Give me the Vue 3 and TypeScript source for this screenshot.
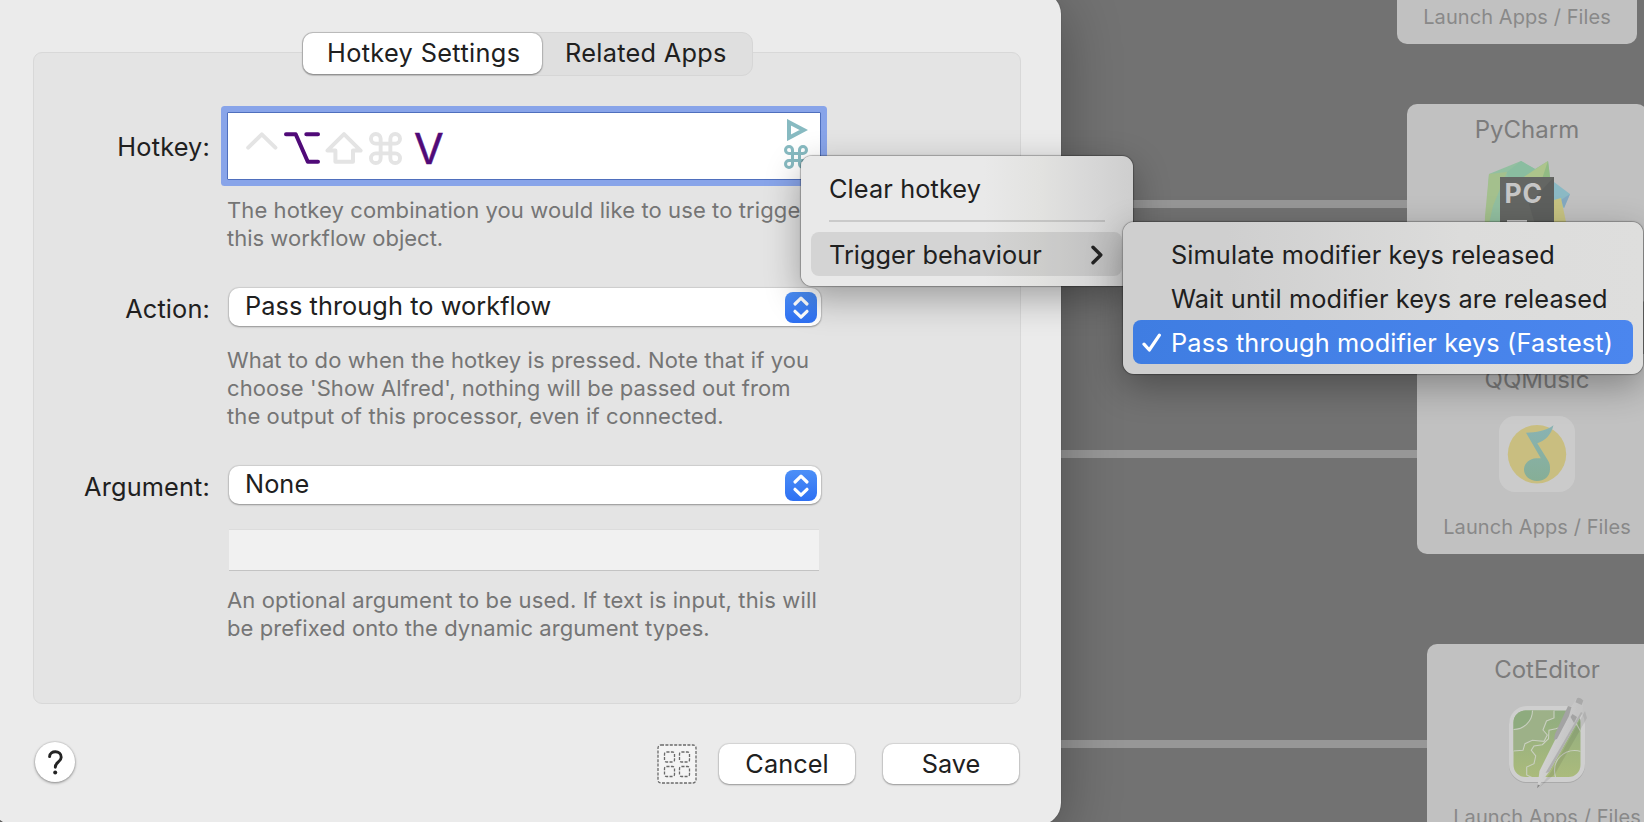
<script setup lang="ts">
import { ref } from 'vue'

interface WorkflowNode {
  title: string
  icon: 'none' | 'pycharm' | 'qqmusic' | 'coteditor'
  left: number
  top: number
}

const nodes: WorkflowNode[] = [
  { title: '', icon: 'none', left: 1397, top: -156 },
  { title: 'PyCharm', icon: 'pycharm', left: 1407, top: 104 },
  { title: 'QQMusic', icon: 'qqmusic', left: 1417, top: 354 },
  { title: 'CotEditor', icon: 'coteditor', left: 1427, top: 644 },
]

const links = [
  { top: 200, width: 347 },
  { top: 450, width: 357 },
  { top: 740, width: 367 },
]

const behaviours = [
  { label: 'Simulate modifier keys released', cls: 'sim' },
  { label: 'Wait until modifier keys are released', cls: 'wait' },
  { label: 'Pass through modifier keys (Fastest)', cls: 'pass' },
]
const selected = ref(2)

const commandPath =
  'M15 6v12a3 3 0 1 0 3-3H6a3 3 0 1 0 3 3V6a3 3 0 1 0-3 3h12a3 3 0 1 0-3-3'
</script>

<template>
  <main class="canvas">
    <div
      v-for="link in links"
      :key="link.top"
      class="link"
      :style="{ top: link.top + 'px', width: link.width + 'px' }"
    ></div>

    <article
      v-for="node in nodes"
      :key="node.left"
      class="node"
      :style="{ left: node.left + 'px', top: node.top + 'px' }"
    >
      <h3 class="node-title">{{ node.title }}</h3>
      <svg class="node-icon" viewBox="0 0 96 96">
        <g v-if="node.icon === 'pycharm'">
          <path d="M10 18 42 5 56 13 69 5 71 21 75 28 75 90 5 90Z" fill="#92bfa0" />
          <path d="M10 18 28 16 14 50 5 90 6 60Z" fill="#a4c08d" />
          <path d="M28 16 42 5 56 13 45 24 30 30Z" fill="#8abda0" />
          <path d="M40 24 69 5 62 30Z" fill="#adc48b" />
          <path d="M69 5 71 21 75 28 62 26Z" fill="#92bb83" />
          <path d="M75 26 91 38 85 52 75 46Z" fill="#8bb9c4" />
          <path d="M91 38 85 52 82 44Z" fill="#84a8c0" />
          <path d="M75 44 82 42 87 66 90 90 75 90Z" fill="#c7c382" />
          <rect x="21" y="21" width="54" height="54" fill="#646663" />
          <path d="M75 21v54H58L50 48Z" fill="#5d5f5d" />
          <text x="25.6" y="47" class="pc">PC</text>
          <rect x="28" y="64" width="20" height="4" fill="#c4c4c4" />
        </g>
        <g v-else-if="node.icon === 'qqmusic'">
          <defs>
            <linearGradient id="note" x1="0" y1="0" x2="0" y2="1">
              <stop offset="0" stop-color="#89b3b3" />
              <stop offset="1" stop-color="#86ae96" />
            </linearGradient>
          </defs>
          <rect x="10" y="10" width="76" height="76" rx="16" fill="#cbcbcb" />
          <circle cx="48" cy="48.2" r="29.2" fill="#c9be80" />
          <path
            d="M37 26.7C47 26.5 57 25 64.5 19.3 62 29 57 34 48.3 37.3L59 54.5C61 57.5 61 60 61 63.5 61 70.5 55 75 48 75S35 70 35 63.5 41 52.5 47 52.2L51.8 52.2Z"
            fill="url(#note)"
          />
        </g>
        <g v-else-if="node.icon === 'coteditor'">
          <defs>
            <linearGradient id="cot" x1="0" y1="0" x2="0" y2="1">
              <stop offset="0" stop-color="#8fac80" />
              <stop offset="1" stop-color="#abbb7c" />
            </linearGradient>
            <linearGradient id="pen" x1="0" y1="0" x2="1" y2="0.4">
              <stop offset="0.3" stop-color="#d2d2d2" />
              <stop offset="0.8" stop-color="#c4c4c4" />
            </linearGradient>
            <clipPath id="map"><rect x="14.5" y="14.5" width="67" height="66.5" rx="12" /></clipPath>
          </defs>
          <rect x="10" y="11" width="76" height="76" rx="18" fill="#aaaaaa" />
          <rect x="10" y="10" width="76" height="76" rx="18" fill="#cfcfcf" />
          <g clip-path="url(#map)">
            <rect x="14" y="14" width="68" height="68" fill="url(#cot)" />
            <path
              d="M55 14V22L47.5 25 44 34 48.3 39 45 45.3 33.3 44.3 26 47.7 24 54.3 14 55V33L33 14Z"
              fill="#9db188"
            />
            <g fill="none" stroke="#c9cfc0" stroke-width="1.1">
              <circle cx="14.5" cy="14.5" r="19" fill="#8eab7e" />
              <path d="M55 14V22L47.5 25 44 34 48.3 39 45 45.3 33.3 44.3 26 47.7 24 54.3 14 55" />
              <path
                d="M82 36 77.3 27.7 66 30 56.7 32.7 50 34.3 49.5 42.7 43.3 48.7 35 50 32.3 54.3 36.7 60 35 67.7 27.7 71V79L34 82"
              />
              <circle cx="75.5" cy="74.5" r="20" />
            </g>
          </g>
          <path d="M40 92 52 76 86 15 88 22 56 78Z" fill="#000" opacity="0.08" />
          <path d="M38.3 91.7 40.5 75 73 10 77 3 84.3 5 83.5 17 50 76Z" fill="url(#pen)" />
          <path d="M46.5 77 50 76 83.5 17 82 16Z" fill="#b0b0b0" />
          <path d="M78 2.2Q81 .8 84.3 4.4L82.7 9 76.5 6.3Z" fill="#a9a9a9" />
          <path d="M69 10 72.5 11 70 20 58 43 55 44 56 38Z" fill="#a3a3a3" />
          <path d="M71.5 21 73.5 18 78 21 75 27Z" fill="#a3a3a3" />
          <path d="M38 92.2 38.8 88.5 41 89.5Z" fill="#858585" />
        </g>
      </svg>
      <p class="node-kind">Launch Apps / Files</p>
    </article>

    <section class="dialog">
      <nav class="tabs">
        <button class="tab tab-on">Hotkey Settings</button>
        <button class="tab tab-off">Related Apps</button>
      </nav>

      <div class="panel">
        <div class="row">
          <label class="label label-hotkey">Hotkey:</label>
          <div class="field">
            <div class="hotkey">
              <svg class="g-ctrl" viewBox="0 0 32 32">
                <path d="M2.2 15.6 15.8 2.4 29.4 15.6" />
              </svg>
              <svg class="g-opt" viewBox="0 0 36 32">
                <path d="M2 2.3H11.7L23.8 29.8H34M22.3 2.3H34" />
              </svg>
              <svg class="g-shift" viewBox="0 0 38 32">
                <path d="M19 2.2 35.6 18.6H28V29.8H10.4V18.6H2.4Z" />
              </svg>
              <svg class="g-cmd" viewBox="1.8 1.8 20.4 20.4"><path :d="commandPath" /></svg>
              <span class="key">V</span>
              <div class="badges">
                <svg class="b-play" viewBox="0 0 21 22">
                  <path d="M2 3.2 16.8 11 2 18.8Z" />
                </svg>
                <svg class="b-cmd" viewBox="1.7 1.7 20.6 20.6"><path :d="commandPath" /></svg>
              </div>
            </div>
            <p class="hint">
              <span class="h1a">The hotkey combination you would like to use to trigger</span><br />
              <span class="h1b">this workflow object.</span>
            </p>
          </div>
        </div>

        <div class="row">
          <label class="label">Action:</label>
          <div class="field">
            <div class="popup">
              <span>Pass through to workflow</span>
              <i class="stepper">
                <svg viewBox="0 0 32 31"><path d="M10 12 16 6.2 22 12M10 19.3 16 25.1 22 19.3" /></svg>
              </i>
            </div>
            <p class="hint hint-low">
              What to do when the hotkey is pressed. Note that if you<br />
              <span class="h2b">choose 'Show Alfred', nothing will be passed out from</span><br />
              the output of this processor, even if connected.
            </p>
          </div>
        </div>

        <div class="row">
          <label class="label">Argument:</label>
          <div class="field">
            <div class="popup">
              <span>None</span>
              <i class="stepper">
                <svg viewBox="0 0 32 31"><path d="M10 12 16 6.2 22 12M10 19.3 16 25.1 22 19.3" /></svg>
              </i>
            </div>
            <div class="textfield"></div>
            <p class="hint">
              <span class="h3a">An optional argument to be used. If text is input, this will</span><br />
              <span class="h2b">be prefixed onto the dynamic argument types.</span>
            </p>
          </div>
        </div>
      </div>

      <footer class="footer">
        <button class="help">
          <svg viewBox="0 0 40 40">
            <path d="M14.6 14.6C14.8 8 26.2 8.2 26.2 15.2 26.2 20 20.3 19.8 20.3 25.2" />
            <circle cx="20.2" cy="30.6" r="2" />
          </svg>
        </button>
        <svg class="grid-icon" viewBox="0 0 40 40">
          <rect x="1" y="1" width="38" height="38" rx="3" />
          <rect x="7.5" y="8" width="10" height="10" rx="2" />
          <rect x="22.5" y="8" width="10" height="10" rx="2" />
          <rect x="7.5" y="22.5" width="10" height="10" rx="2" />
          <rect x="22.5" y="22.5" width="10" height="10" rx="2" />
        </svg>
        <button class="btn">Cancel</button>
        <button class="btn">Save</button>
      </footer>
    </section>

    <div class="menu context">
      <div class="item clear">Clear hotkey</div>
      <hr class="rule" />
      <div class="item open">
        <span>Trigger behaviour</span>
        <svg class="chevron" viewBox="0 0 12 20"><path d="M2 2.2 9.8 10 2 17.8" /></svg>
      </div>
    </div>

    <div class="menu submenu">
      <div
        v-for="(b, i) in behaviours"
        :key="b.cls"
        class="item choice"
        :class="[b.cls, { chosen: i === selected }]"
        @click="selected = i"
      >
        <svg v-if="i === selected" class="check" viewBox="0 0 20 20">
          <path d="M2 11.2 7.3 17 17.4 2.2" />
        </svg>
        <span>{{ b.label }}</span>
      </div>
    </div>
    <div class="edge"></div>
  </main>
</template>

<style>
body {
  background: #727272;
}
</style>

<style scoped>
.canvas {
  position: relative;
  width: 1644px;
  height: 822px;
  overflow: hidden;
  background: #727272;
  color: #202020;
  font-family: 'Inter', 'Liberation Sans', sans-serif;
  font-size: 25.3px;
}
.canvas * {
  box-sizing: border-box;
}
button {
  border: 0;
  padding: 0;
  font: inherit;
  color: inherit;
}
svg {
  display: block;
  flex: none;
}

.link {
  position: absolute;
  left: 1060px;
  height: 8px;
  background: #979797;
}
.node {
  position: absolute;
  display: flex;
  flex-direction: column;
  align-items: center;
  width: 240px;
  height: 200px;
  padding-top: 10px;
  border-radius: 10px;
  background: #c1c1c1;
}
.node-title {
  height: 32px;
  margin: 0;
  font-size: 24px;
  font-weight: 400;
  line-height: 32px;
  letter-spacing: 0;
  color: #7c7c7c;
}
.node-icon {
  width: 96px;
  height: 96px;
  margin-top: 10px;
}
.node-kind {
  margin: 13px 0 0;
  font-size: 20px;
  line-height: 24px;
  letter-spacing: 0.08px;
  color: #898989;
}
.pc {
  font-family: 'Inter', sans-serif;
  font-size: 26.5px;
  font-weight: 700;
  letter-spacing: 0.8px;
  fill: #c6c6c6;
}

.dialog {
  position: absolute;
  left: -8px;
  top: -8px;
  display: flex;
  flex-direction: column;
  width: 1069px;
  height: 833px;
  padding: 40px 40px 0 41px;
  border-radius: 22px;
  background: #ebebeb;
  box-shadow:
    0 0 1px rgba(0, 0, 0, 0.6),
    0 14px 60px rgba(0, 0, 0, 0.32);
}
.tabs {
  z-index: 1;
  display: flex;
  align-self: flex-start;
  width: 451px;
  height: 44px;
  margin: 0 0 -24px 269px;
  padding: 1px;
  border: 1px solid #d6d6d6;
  border-radius: 11px;
  background: #dfdfdf;
}
.tab {
  height: 41px;
  margin-top: -1px;
  background: none;
  border-radius: 10px;
  line-height: 38px;
  text-align: left;
}
.tab-on {
  width: 239px;
  margin-left: -1px;
  padding: 0 0 2px 24px;
  background: #fff;
  box-shadow:
    0 0 1px 1px rgba(0, 0, 0, 0.13),
    0 1px 2px rgba(0, 0, 0, 0.35);
  letter-spacing: 0.36px;
}
.tab-off {
  padding: 0 0 2px 23px;
  letter-spacing: 0.3px;
}
.panel {
  height: 652px;
  padding-top: 59px;
  border: 1px solid #d8d8d8;
  border-radius: 9px;
  background: #e4e4e4;
}
.row {
  display: flex;
  gap: 17px;
  margin-bottom: 36px;
}
.label {
  width: 176px;
  padding-top: 2px;
  text-align: right;
  line-height: 38px;
  letter-spacing: 0.16px;
}
.label-hotkey {
  padding-top: 16px;
  letter-spacing: 0.2px;
}
.field {
  width: 660px;
}
.hotkey {
  display: flex;
  align-items: center;
  width: 594px;
  height: 68px;
  padding: 4px 12px 0 18px;
  border: 1px solid #4f6fbd;
  background: #fff;
  box-shadow: 0 0 0 6px #88a4e9;
  border-radius: 1px;
}
.hotkey svg {
  fill: none;
  stroke: #e4e4e4;
  stroke-width: 4;
  stroke-linecap: round;
  stroke-linejoin: round;
}
.g-ctrl {
  width: 32px;
  height: 32px;
}
.hotkey .g-opt {
  width: 36px;
  height: 32px;
  margin-left: 6px;
  stroke: #500a78;
}
.g-shift {
  width: 38px;
  height: 32px;
  margin-left: 5px;
}
.hotkey .g-cmd {
  width: 33px;
  height: 33px;
  margin-left: 6px;
  stroke-width: 2.4;
}
.key {
  margin-left: 12px;
  font-size: 43px;
  font-weight: 400;
  line-height: 34px;
  color: #500a78;
  -webkit-text-stroke: 0.5px #500a78;
}
.badges {
  display: flex;
  flex-direction: column;
  align-items: flex-end;
  gap: 4px;
  margin: -8px 0 0 auto;
}
.hotkey .b-play {
  width: 21px;
  height: 22px;
  stroke: #87bac1;
  stroke-linejoin: miter;
}
.hotkey .b-cmd {
  width: 24px;
  height: 24px;
  stroke: #87bac1;
  stroke-width: 2.6;
}
.hint {
  margin: 16px 0 0;
  font-size: 22px;
  line-height: 28px;
  letter-spacing: 0.1px;
  white-space: nowrap;
  color: #757575;
}
.hint-low {
  margin-top: 20px;
}
.h1b {
  letter-spacing: 0;
}
.h2b {
  letter-spacing: 0.06px;
}
.h3a {
  letter-spacing: 0.14px;
}
.popup {
  display: flex;
  justify-content: space-between;
  width: 592px;
  height: 38px;
  margin-left: 2px;
  padding: 4px 4px 0 16px;
  border-radius: 10px;
  background: #fff;
  box-shadow:
    0 0 1px 1px rgba(0, 0, 0, 0.09),
    0 1px 2px rgba(0, 0, 0, 0.3);
  line-height: 28px;
  letter-spacing: 0.07px;
}
.stepper {
  width: 32px;
  height: 31px;
  border-radius: 8px;
  background: linear-gradient(#4c8ff7, #2e70f3);
}
.stepper svg {
  width: 32px;
  height: 31px;
  fill: none;
  stroke: #fff;
  stroke-width: 3.2;
  stroke-linecap: round;
  stroke-linejoin: round;
}
.textfield {
  width: 590px;
  height: 42px;
  margin: 25px 0 -1px 2px;
  border-top: 1px solid #dcdcdc;
  border-bottom: 1px solid #c3c3c3;
  background: #f1f1f1;
}
.footer {
  display: flex;
  align-items: flex-start;
  padding: 40px 2px 0 2px;
}
.help {
  width: 40px;
  height: 40px;
  margin: -2px auto 0 0;
  border-radius: 50%;
  background: #fff;
  box-shadow:
    0 0 1px 1px rgba(0, 0, 0, 0.06),
    0 1px 3px rgba(0, 0, 0, 0.4);
}
.help path {
  fill: none;
  stroke: #232323;
  stroke-width: 2.9;
  stroke-linecap: round;
}
.help circle {
  fill: #232323;
}
.grid-icon {
  width: 40px;
  height: 40px;
  margin-right: 22px;
  fill: #f4f4f4;
  stroke: #6a6a6a;
  stroke-width: 1.3;
  stroke-dasharray: 3 1.4;
}
.btn {
  width: 136px;
  height: 40px;
  border-radius: 10px;
  background: #fff;
  box-shadow:
    0 0 1px 1px rgba(0, 0, 0, 0.09),
    0 1px 2px rgba(0, 0, 0, 0.3);
  line-height: 38px;
  padding-bottom: 1px;
  letter-spacing: 0.05px;
}
.btn + .btn {
  margin-left: 28px;
}

.menu {
  position: absolute;
  padding: 10px;
  border-radius: 11px;
  box-shadow:
    0 0 0 1px rgba(0, 0, 0, 0.12),
    0 0 2px rgba(0, 0, 0, 0.5),
    0 12px 36px rgba(0, 0, 0, 0.32);
}
.context {
  left: 801px;
  top: 156px;
  width: 332px;
  height: 130px;
  background: linear-gradient(90deg, #e9e9e9 55%, #e2e2e0 72%, #d8d8d8 86%, #cecece);
}
.submenu {
  left: 1123px;
  top: 222px;
  width: 520px;
  height: 152px;
  background: linear-gradient(90deg, #cfcfcf 20%, #dcdcdb 65%, #dededd);
}
.item {
  display: flex;
  align-items: center;
  height: 44px;
  padding: 1px 19px 0 18px;
  border-radius: 8px;
  letter-spacing: 0.02px;
  white-space: nowrap;
}
.clear {
  letter-spacing: 0.12px;
}
.rule {
  height: 2px;
  margin: 10px 18px;
  border: 0;
  background: rgba(0, 0, 0, 0.13);
}
.open {
  justify-content: space-between;
  width: 311px;
  background: rgba(0, 0, 0, 0.09);
}
.chevron {
  width: 12px;
  height: 20px;
  fill: none;
  stroke: #232323;
  stroke-width: 3.4;
  stroke-linecap: round;
  stroke-linejoin: round;
}
.choice {
  position: relative;
  padding-left: 38px;
}
.sim {
  letter-spacing: 0.11px;
}
.wait {
  letter-spacing: 0.1px;
}
.pass {
  letter-spacing: 0.14px;
}
.chosen {
  background: linear-gradient(90deg, #3f7de2, #4b86ee);
  color: #fff;
}
.check {
  position: absolute;
  left: 9px;
  top: 13px;
  width: 20px;
  height: 20px;
  fill: none;
  stroke: #fff;
  stroke-width: 3.2;
  stroke-linecap: round;
  stroke-linejoin: round;
}
.edge {
  position: absolute;
  left: 1643px;
  top: 302px;
  width: 1px;
  height: 52px;
  background: #555;
}
</style>
